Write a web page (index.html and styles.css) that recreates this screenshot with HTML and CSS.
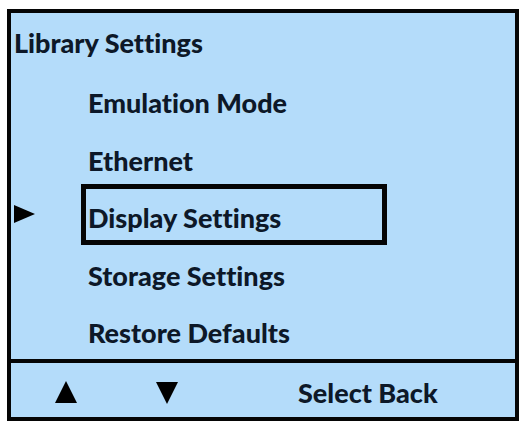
FILE: index.html
```html
<!DOCTYPE html>
<html lang="en">
<head>
<meta charset="utf-8">
<title>Library Settings</title>
<link rel="stylesheet" href="styles.css">
</head>
<body>
<div class="screen">
  <div class="content">
    <div class="title">Library Settings</div>
    <ul class="menu">
      <li class="item"><span class="marker"></span><span class="label">Emulation Mode</span></li>
      <li class="item"><span class="marker"></span><span class="label">Ethernet</span></li>
      <li class="item selected">
        <span class="marker">
          <svg class="pointer" width="21" height="18" viewBox="0 0 21 18"><polygon points="0,0 21,9 0,18" fill="#000"/></svg>
        </span>
        <span class="label">Display Settings</span>
      </li>
      <li class="item"><span class="marker"></span><span class="label">Storage Settings</span></li>
      <li class="item"><span class="marker"></span><span class="label">Restore Defaults</span></li>
    </ul>
  </div>
  <div class="footer">
    <svg class="arrow up" width="22" height="22" viewBox="0 0 22 22"><polygon points="11,0 22,22 0,22" fill="#000"/></svg>
    <svg class="arrow down" width="22" height="22" viewBox="0 0 22 22"><polygon points="0,0 22,0 11,22" fill="#000"/></svg>
    <span class="softkeys">Select Back</span>
  </div>
</div>
</body>
</html>
```
FILE: styles.css
```css
html, body {
  margin: 0;
  padding: 0;
  background: #ffffff;
}

.screen {
  box-sizing: border-box;
  width: 512px;
  height: 412px;
  margin: 9px 0 0 7px;
  border: 4px solid #050505;
  background: #b4dcfa;
  display: flex;
  flex-direction: column;
  font-family: Lato, "Open Sans", sans-serif;
  font-weight: 900;
  font-size: 27px;
  line-height: 31px;
  font-variant-ligatures: none;
  color: #0d1828;
}

.content {
  flex: 1;
  padding: 14px 0 0 3px;
}

.title {
  height: 31px;
}

.menu {
  list-style: none;
  margin: 29px 0 0 0;
  padding: 0;
  display: flex;
  flex-direction: column;
  gap: 26.5px;
}

.item {
  display: flex;
  align-items: flex-start;
  height: 31px;
}

.marker {
  width: 74px;
  flex: none;
}

.pointer {
  display: block;
  margin-top: 3px;
}

.selected .label {
  box-sizing: border-box;
  width: 306px;
  border: 5px solid #050505;
  padding: 13px 0 7px 2px;
  margin: -18px 0 -12px -7px;
}

.footer {
  flex: none;
  height: 54px;
  border-top: 4px solid #050505;
  display: flex;
  align-items: flex-start;
}

.arrow {
  display: block;
  flex: none;
}

.up {
  margin: 18px 0 0 44px;
}

.down {
  margin: 19px 0 0 79px;
}

.softkeys {
  margin: 14px 0 0 120px;
}
```
